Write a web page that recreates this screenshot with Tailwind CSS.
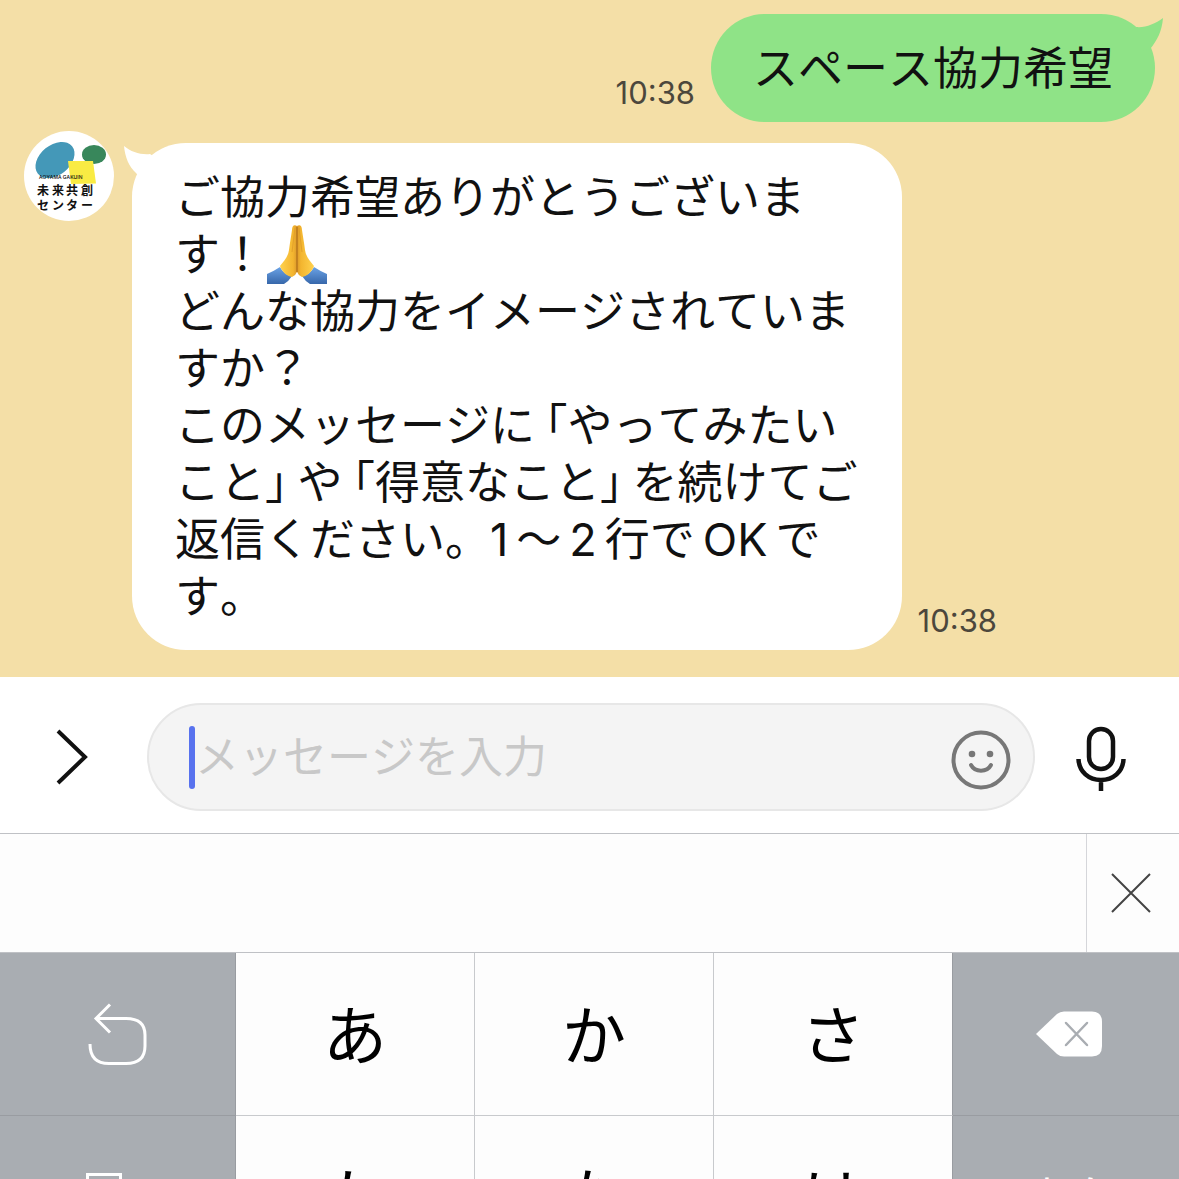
<!DOCTYPE html>
<html lang="ja">

<head>
    <title>未来共創センター</title>
    <meta charset="UTF-8">
    <meta name="viewport" content="width=device-width, initial-scale=1.0">
    <script src="https://cdn.jsdelivr.net/npm/@tailwindcss/browser@4"></script>
</head>

<body class="flex flex-col h-screen overflow-hidden bg-white text-[#111] font-[Inter,'Noto_Sans_CJK_JP',sans-serif] [font-kerning:none]">

<!-- talk -->
<main class="shrink-0 bg-[#f4dfa7] px-6 pt-[14px] pb-[27px] text-[45px] leading-[57px]">
    <div class="flex items-end justify-end gap-4">
        <time class="pb-[11px] text-[31px] leading-9 text-[#4c473c]">10:38</time>
        <div class="relative rounded-[54px] bg-[#8fe387] px-[42px] pt-[26px] pb-[25px]">
            <svg class="absolute -right-2 top-1 w-8 h-9" viewBox="0 0 32 36" fill="#8fe387" aria-hidden="true">
                <path d="M5 9C14 10 24 6 32 0C31 13 26 23 19 31L12 33L0 12Z"/>
            </svg>
            <p>スペース協力希望</p>
        </div>
    </div>

    <div class="flex mt-[9px]">
        <svg class="shrink-0 w-[90px] h-[90px] rounded-full bg-white" viewBox="0 0 90 90" role="img" aria-label="未来共創センター">
            <ellipse cx="31" cy="29" rx="22" ry="15" fill="#4498b8" transform="rotate(-39 31 29)"/>
            <ellipse cx="70" cy="23.500" rx="12" ry="9.500" fill="#38875b"/>
            <path d="M44 30h25l3 22.500l-25 .5z" fill="#f9eb43"/>
            <text x="15" y="48" font-size="5" font-weight="500" fill="#111">AOYAMA GAKUIN</text>
            <text x="13 28 42 57" y="64" font-size="12" font-weight="700" fill="#111">未来共創</text>
            <text x="13 28 42 57" y="79" font-size="12" font-weight="700" fill="#111">センター</text>
        </svg>
        <div class="flex items-end gap-4 ml-[18px] mt-3">
            <div class="relative rounded-[54px] bg-white pl-[43px] pr-11 pt-[26px] pb-[25px]">
                <svg class="absolute -left-2 top-[3px] w-8 h-9" viewBox="0 0 32 36" fill="#fff" aria-hidden="true">
                    <path d="M0 0C7 6 17 9 26 8L32 12L18 34L12 27C5 21 1 11 0 0Z"/>
                </svg>
                <p>
                    ご協力希望ありがとうございま<br>
                    す！<svg class="inline-block align-top ml-0.5 -mt-0.5 -mb-1 w-[60px] h-[60px]" viewBox="0 0 60 60" role="img" aria-label="🙏">
                        <defs>
                            <linearGradient id="skin" x1="0" x2="1" y1="0" y2="0">
                                <stop offset="0" stop-color="#ffd24e"/>
                                <stop offset=".75" stop-color="#f3b52f"/>
                                <stop offset="1" stop-color="#d9952a"/>
                            </linearGradient>
                            <linearGradient id="sleeve" x1="0" x2="0" y1="0" y2="1">
                                <stop offset="0" stop-color="#6ba3e6"/>
                                <stop offset="1" stop-color="#3767aa"/>
                            </linearGradient>
                            <g id="hand">
                                <path d="M0 50Q7 47 13 43C16 48 19 51 25 52Q22 57 17 60H0Z" fill="url(#sleeve)"/>
                                <path d="M30 2C27 0 25 2 25 6C24 13 23 18 22 26C21 33 17 37 13 42C15 48 20 52 25 53Q29 51 30.500 47Z" fill="url(#skin)"/>
                                <path d="M28 4L25 28" stroke="#e2a02a" fill="none"/>
                            </g>
                        </defs>
                        <use href="#hand"/>
                        <use href="#hand" transform="matrix(-1 0 0 1 60 0)"/>
                        <path d="M30 3V48" stroke="#b0701a" stroke-width="1.200"/>
                    </svg><br>
                    どんな協力をイメージされていま<br>
                    すか？<br>
                    このメッセージに<span class="ml-2.5 [font-feature-settings:'halt']">「</span>やってみたい<br>
                    こと<span class="mr-2.5 [font-feature-settings:'halt']">」</span>や<span class="ml-2.5 [font-feature-settings:'halt']">「</span>得意なこと<span class="mr-2.5 [font-feature-settings:'halt']">」</span>を続けてご<br>
                    返信ください。<span class="mr-2">1</span>〜<span class="mx-2">2</span>行で<span class="mx-2">OK</span>で<br>
                    す。
                </p>
            </div>
            <time class="pb-[11px] text-[31px] leading-9 text-[#4c473c]">10:38</time>
        </div>
    </div>
</main>

<!-- message input -->
<form class="shrink-0 flex items-center h-[156px] pl-[55px] pr-[52px] pt-1">
    <button type="button" aria-label="メニューを開く" class="shrink-0 w-[34px]">
        <svg class="w-[34px] h-14" viewBox="0 0 34 56" fill="none" stroke="#111" stroke-width="4">
            <path d="M3 2L30 28L3 54"/>
        </svg>
    </button>
    <div class="flex flex-1 items-center h-[108px] ml-[58px] pl-10 pr-[22px] rounded-[54px] border-2 border-[#e7e7e7] bg-[#f4f4f4]">
        <span class="shrink-0 w-1.5 h-[63px] rounded-full bg-[#5872ee]"></span>
        <input type="text" aria-label="メッセージを入力" placeholder="メッセージを入力"
               class="flex-1 min-w-0 h-[63px] bg-transparent text-[44px] placeholder:text-[#c8c8c8] outline-none">
        <button type="button" aria-label="スタンプ" class="shrink-0 mt-1.5">
            <svg class="w-[60px] h-[60px]" viewBox="0 0 60 60" fill="none" stroke="#777" stroke-width="4">
                <circle cx="30" cy="30" r="27.500"/>
                <circle cx="21" cy="24" r="3.300" fill="#777" stroke="none"/>
                <circle cx="39" cy="24" r="3.300" fill="#777" stroke="none"/>
                <path d="M20 35C24 42.500 36 42.500 40 35" stroke-linecap="round"/>
            </svg>
        </button>
    </div>
    <button type="button" aria-label="音声入力" class="shrink-0 ml-10 mt-1">
        <svg class="w-[52px] h-[66px]" viewBox="0 0 52 66" fill="none" stroke="#111" stroke-width="4.500">
            <rect x="14" y="3" width="24" height="40" rx="12"/>
            <path d="M3.500 33C4 46 14 54 26 54S48 46 48.500 33M26 54V65"/>
        </svg>
    </button>
</form>

<!-- candidates -->
<div class="shrink-0 flex h-[120px] border-y border-[#bfc1c5] bg-[#fdfdfd]">
    <div class="flex-1"></div>
    <button type="button" aria-label="閉じる" class="flex items-center justify-center w-[93px] border-l border-[#d5d6da]">
        <svg class="w-10 h-10 -ml-1" viewBox="0 0 40 40" stroke="#444" stroke-width="2">
            <path d="M1 1L39 39M39 1L1 39"/>
        </svg>
    </button>
</div>

<!-- keyboard -->
<div class="shrink-0 grid grid-cols-[236fr_239fr_239fr_239fr_226fr] auto-rows-[163px] text-[64px] text-black *:flex *:items-center *:justify-center *:border-b">
    <button type="button" aria-label="戻す" class="bg-[#a9adb2] border-r border-[#999ca1]">
        <svg class="w-[60px] h-[62px]" viewBox="0 0 60 62" fill="none" stroke="#fff" stroke-width="3">
            <path d="M22 1.500L8 15.500L22 29.500M8 15.500H38Q57 15.500 57 32V43Q57 60.500 38 60.500H21Q2 60.500 2 41"/>
        </svg>
    </button>
    <button type="button" class="bg-[#fdfdfd] border-r border-[#c8cacd] pt-1">あ</button>
    <button type="button" class="bg-[#fdfdfd] border-r border-[#c8cacd] pt-1">か</button>
    <button type="button" class="bg-[#fdfdfd] border-r border-r-[#999ca1] border-b-[#c8cacd] pt-1">さ</button>
    <button type="button" aria-label="削除" class="bg-[#a9adb2] border-[#999ca1] pl-1.5">
        <svg class="w-[68px] h-[46px]" viewBox="0 0 68 46" fill="none">
            <path d="M1 23L22 3Q25 .5 29 .5H57Q67 .5 67 11V35Q67 45.500 57 45.500H29Q25 45.500 22 43Z" fill="#fff"/>
            <path d="M31 12L52 34M52 12L31 34" stroke="#a9adb2" stroke-width="2.500" stroke-linecap="round"/>
        </svg>
    </button>
    <button type="button" aria-label="記号" class="bg-[#a9adb2] border-r border-[#999ca1]">
        <svg class="w-16 h-12" viewBox="0 0 64 48" fill="none" stroke="#fff" stroke-width="3">
            <rect x="1.500" y="1.500" width="33" height="45"/>
        </svg>
    </button>
    <button type="button" class="bg-[#fdfdfd] border-r border-[#c8cacd] pt-1">た</button>
    <button type="button" class="bg-[#fdfdfd] border-r border-[#c8cacd] pt-1">な</button>
    <button type="button" class="bg-[#fdfdfd] border-r border-r-[#999ca1] border-b-[#c8cacd] pt-1">は</button>
    <button type="button" class="bg-[#a9adb2] border-[#999ca1] pl-1.5 pt-1 text-[44px] text-white">空白</button>
</div>

</body>
</html>
